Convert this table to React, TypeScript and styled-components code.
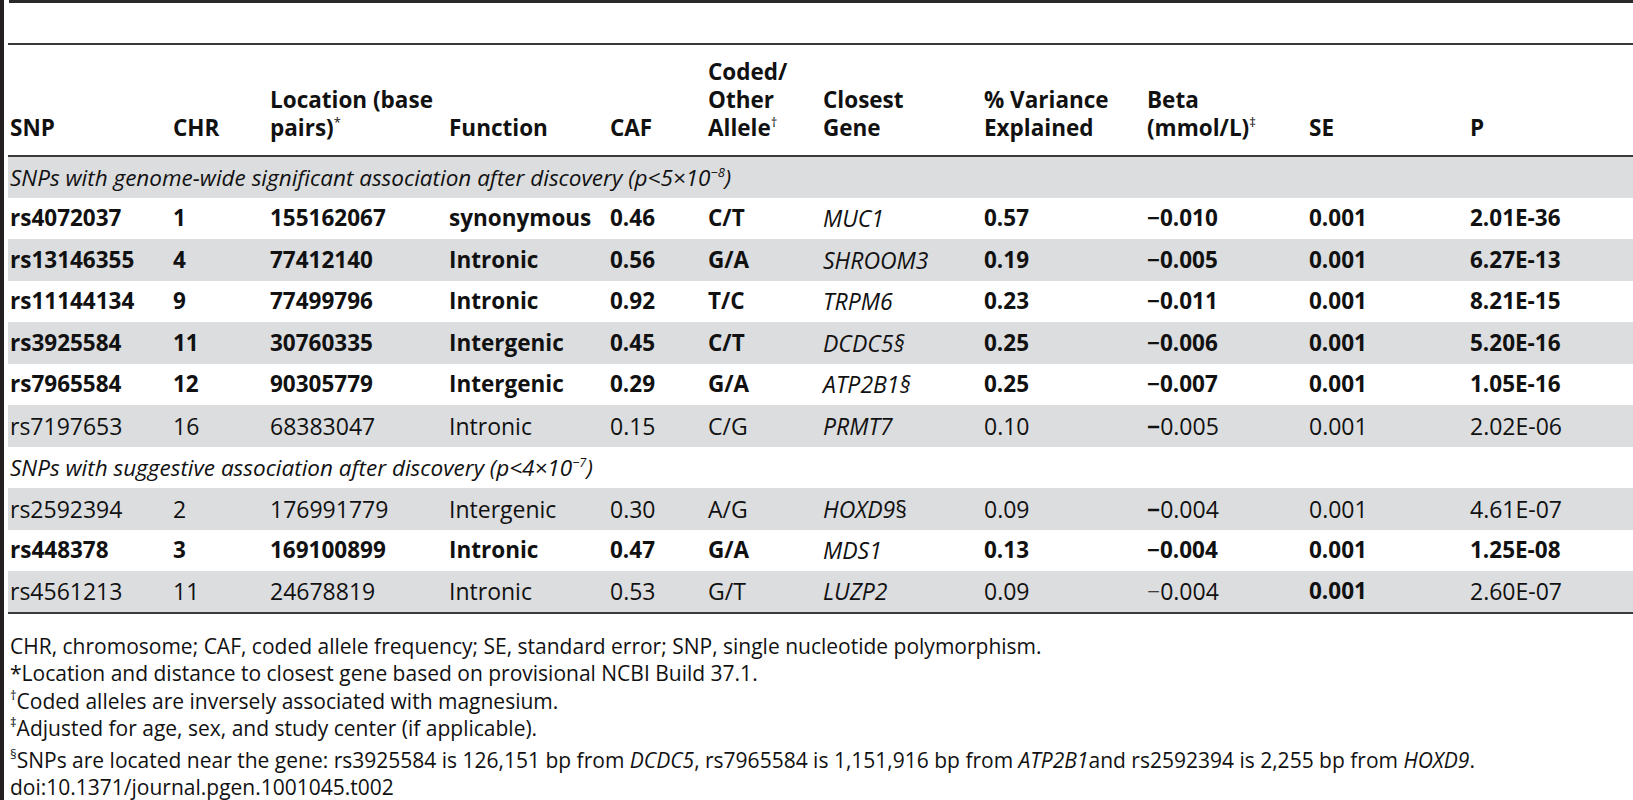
import React from "react";
import styled, { createGlobalStyle } from "styled-components";

const Global = createGlobalStyle`
  html, body { margin: 0; padding: 0; background: #fff; }
  body { font-family: "Open Sans", "Liberation Sans", sans-serif; color: #111; }
`;

const Page = styled.div`
  border-left: 4px solid #231f20;
  padding-left: 4px;
  min-height: 800px;
  box-sizing: border-box;
`;

const TopBar = styled.div`
  height: 3px;
  background: #2a2a2a;
  margin-left: 1px;
`;

const Gap = styled.div`
  height: 40px;
`;

const Table = styled.table`
  width: 1625px;
  border-collapse: collapse;
  table-layout: fixed;
  font-size: 23px;
  border-top: 2px solid #3a3a3a;
  border-bottom: 2px solid #3a3a3a;
`;

const HeadRow = styled.tr`
  height: 112px;
  border-bottom: 2px solid #3a3a3a;
`;

const Th = styled.th`
  text-align: left;
  vertical-align: bottom;
  font-weight: 700;
  font-size: 22.5px;
  line-height: 28px;
  padding: 0 0 13px 2px;
`;

const Row = styled.tr<{ $gray: boolean }>`
  height: 41.5px;
  background: ${(p) => (p.$gray ? "#dcdddf" : "#fff")};
`;

const Td = styled.td<{ $bold?: boolean }>`
  padding: 0 0 0 2px;
  font-weight: ${(p) => (p.$bold ? 700 : 400)};
  font-size: ${(p) => (p.$bold ? "22.5px" : "23px")};
  white-space: nowrap;
  line-height: 28px;
`;

const SectionCell = styled.td`
  padding: 0 0 0 2px;
  font-style: italic;
  font-size: 22.5px;
  white-space: nowrap;
`;

const Gene = styled.span`
  font-style: italic;
  font-weight: 400;
  font-size: 23px;
`;

const Upright = styled.span`
  font-style: normal;
`;

const Minus = styled.span<{ $bold?: boolean }>`
  font-weight: ${(p) => (p.$bold ? 700 : 300)};
`;

const Sup = styled.sup`
  font-size: 13px;
  font-weight: 400;
  vertical-align: 9px;
  line-height: 0;
`;

const Notes = styled.div`
  padding: 19px 0 0 2px;
  font-size: 21px;
  line-height: 27.5px;
  color: #111;
`;

const Note = styled.div<{ $extra?: boolean }>`
  margin-top: ${(p) => (p.$extra ? "4px" : "0")};
`;

const NoteGene = styled.span`
  font-style: italic;
`;

const cols = [163, 97, 179, 161, 98, 115, 161, 163, 162, 161, 165];

type R = {
  snp: string;
  chr: string;
  loc: string;
  fn: string;
  caf: string;
  allele: string;
  gene: React.ReactNode;
  varx: string;
  beta: string;
  se: string;
  p: string;
  bold: boolean;
  minusBold: boolean;
  seBold?: boolean;
};

const group1: R[] = [
  { snp: "rs4072037", chr: "1", loc: "155162067", fn: "synonymous", caf: "0.46", allele: "C/T", gene: "MUC1", varx: "0.57", beta: "0.010", se: "0.001", p: "2.01E-36", bold: true, minusBold: true },
  { snp: "rs13146355", chr: "4", loc: "77412140", fn: "Intronic", caf: "0.56", allele: "G/A", gene: "SHROOM3", varx: "0.19", beta: "0.005", se: "0.001", p: "6.27E-13", bold: true, minusBold: true },
  { snp: "rs11144134", chr: "9", loc: "77499796", fn: "Intronic", caf: "0.92", allele: "T/C", gene: "TRPM6", varx: "0.23", beta: "0.011", se: "0.001", p: "8.21E-15", bold: true, minusBold: true },
  { snp: "rs3925584", chr: "11", loc: "30760335", fn: "Intergenic", caf: "0.45", allele: "C/T", gene: "DCDC5§", varx: "0.25", beta: "0.006", se: "0.001", p: "5.20E-16", bold: true, minusBold: true },
  { snp: "rs7965584", chr: "12", loc: "90305779", fn: "Intergenic", caf: "0.29", allele: "G/A", gene: "ATP2B1§", varx: "0.25", beta: "0.007", se: "0.001", p: "1.05E-16", bold: true, minusBold: true },
  { snp: "rs7197653", chr: "16", loc: "68383047", fn: "Intronic", caf: "0.15", allele: "C/G", gene: "PRMT7", varx: "0.10", beta: "0.005", se: "0.001", p: "2.02E-06", bold: false, minusBold: true },
];

const group2: R[] = [
  { snp: "rs2592394", chr: "2", loc: "176991779", fn: "Intergenic", caf: "0.30", allele: "A/G", gene: (<>HOXD9<Upright>§</Upright></>), varx: "0.09", beta: "0.004", se: "0.001", p: "4.61E-07", bold: false, minusBold: true },
  { snp: "rs448378", chr: "3", loc: "169100899", fn: "Intronic", caf: "0.47", allele: "G/A", gene: "MDS1", varx: "0.13", beta: "0.004", se: "0.001", p: "1.25E-08", bold: true, minusBold: true },
  { snp: "rs4561213", chr: "11", loc: "24678819", fn: "Intronic", caf: "0.53", allele: "G/T", gene: "LUZP2", varx: "0.09", beta: "0.004", se: "0.001", p: "2.60E-07", bold: false, minusBold: false, seBold: true },
];

const DataRow = ({ r, gray }: { r: R; gray: boolean }) => (
  <Row $gray={gray}>
    <Td $bold={r.bold}>{r.snp}</Td>
    <Td $bold={r.bold}>{r.chr}</Td>
    <Td $bold={r.bold}>{r.loc}</Td>
    <Td $bold={r.bold}>{r.fn}</Td>
    <Td $bold={r.bold}>{r.caf}</Td>
    <Td $bold={r.bold}>{r.allele}</Td>
    <Td><Gene>{r.gene}</Gene></Td>
    <Td $bold={r.bold}>{r.varx}</Td>
    <Td $bold={r.bold}><Minus $bold={r.minusBold}>−</Minus>{r.beta}</Td>
    <Td $bold={r.bold || r.seBold}>{r.se}</Td>
    <Td $bold={r.bold}>{r.p}</Td>
  </Row>
);

export default function App() {
  return (
    <>
      <Global />
      <Page>
        <TopBar />
        <Gap />
        <Table>
          <colgroup>
            {cols.map((w, i) => (
              <col key={i} style={{ width: w }} />
            ))}
          </colgroup>
          <thead>
            <HeadRow>
              <Th>SNP</Th>
              <Th>CHR</Th>
              <Th>Location (base<br />pairs)<Sup>*</Sup></Th>
              <Th>Function</Th>
              <Th>CAF</Th>
              <Th>Coded/<br />Other<br />Allele<Sup>†</Sup></Th>
              <Th>Closest<br />Gene</Th>
              <Th>% Variance<br />Explained</Th>
              <Th>Beta<br />(mmol/L)<Sup>‡</Sup></Th>
              <Th>SE</Th>
              <Th>P</Th>
            </HeadRow>
          </thead>
          <tbody>
            <Row $gray={true}>
              <SectionCell colSpan={11}>
                SNPs with genome-wide significant association after discovery (p&lt;5×10<Sup>−8</Sup>)
              </SectionCell>
            </Row>
            {group1.map((r, i) => (
              <DataRow key={r.snp} r={r} gray={i % 2 === 1} />
            ))}
            <Row $gray={false}>
              <SectionCell colSpan={11}>
                SNPs with suggestive association after discovery (p&lt;4×10<Sup>−7</Sup>)
              </SectionCell>
            </Row>
            {group2.map((r, i) => (
              <DataRow key={r.snp} r={r} gray={i % 2 === 0} />
            ))}
          </tbody>
        </Table>
        <Notes>
          <Note>CHR, chromosome; CAF, coded allele frequency; SE, standard error; SNP, single nucleotide polymorphism.</Note>
          <Note>*Location and distance to closest gene based on provisional NCBI Build 37.1.</Note>
          <Note><Sup>†</Sup>Coded alleles are inversely associated with magnesium.</Note>
          <Note><Sup>‡</Sup>Adjusted for age, sex, and study center (if applicable).</Note>
          <Note $extra><Sup>§</Sup>SNPs are located near the gene: rs3925584 is 126,151 bp from <NoteGene>DCDC5</NoteGene>, rs7965584 is 1,151,916 bp from <NoteGene>ATP2B1</NoteGene>and rs2592394 is 2,255 bp from <NoteGene>HOXD9</NoteGene>.</Note>
          <Note>doi:10.1371/journal.pgen.1001045.t002</Note>
        </Notes>
      </Page>
    </>
  );
}
